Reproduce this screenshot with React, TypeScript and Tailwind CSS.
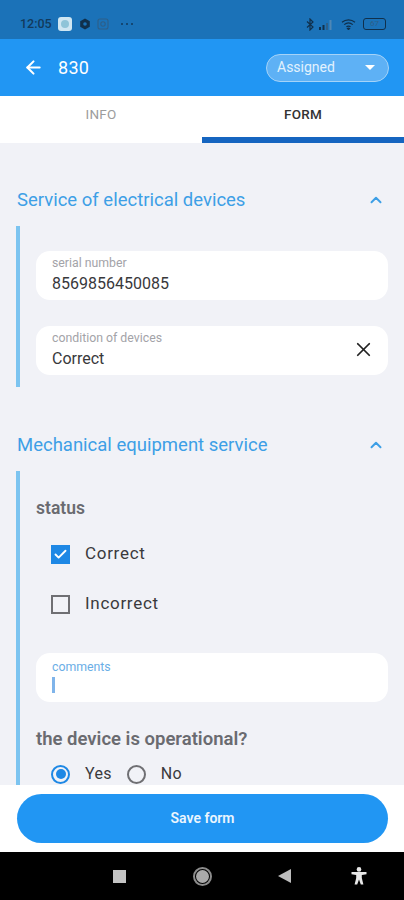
import { ArrowLeft, Check, ChevronUp, X } from "lucide-react";

function Field({ label, value, focused, clear }: { label: string; value?: string; focused?: boolean; clear?: boolean }) {
  return (
    <div className="flex h-[49px] items-center justify-between rounded-[14px] bg-white pb-[3px] pl-[16px] pr-[13px]">
      <div className="min-w-0">
        <p className={`text-[12.3px] leading-[14px] ${focused ? "text-[#6aaee6]" : "text-[#a3a3a8]"}`}>{label}</p>
        {value ? (
          <p className="mt-[4px] text-[16px] leading-[19px] text-[#38383b]">{value}</p>
        ) : (
          <div className="mt-[3px] h-[16px] w-[3px] bg-[#7fb4ea]" />
        )}
      </div>
      {clear ? <X size={23} strokeWidth={1.8} className="text-[#222]" /> : null}
    </div>
  );
}

function SectionHeader({ title }: { title: string }) {
  return (
    <div className="flex h-[28px] items-center justify-between pl-[17px] pr-[19px] pt-[3px]">
      <h2 className="text-[18.5px] font-normal leading-[24px] text-[#3d9fe6]">{title}</h2>
      <ChevronUp size={18} strokeWidth={2.6} className="text-[#3d9fe6]" />
    </div>
  );
}

function CheckRow({ label, checked }: { label: string; checked?: boolean }) {
  return (
    <div className="flex h-[20px] items-center gap-[15px] pl-[15px]">
      {checked ? (
        <span className="flex h-[19px] w-[19px] items-center justify-center bg-[#1e88e5] text-white">
          <Check size={15} strokeWidth={3} />
        </span>
      ) : (
        <span className="h-[19px] w-[19px] border-2 border-[#6f6f73]" />
      )}
      <span className="text-[17px] tracking-[0.7px] text-[#3a3a3d]">{label}</span>
    </div>
  );
}

function StatusBar() {
  return (
    <div className="flex h-[39px] shrink-0 items-center justify-between bg-[#1b72b8] pl-[20px] pr-[18px] pt-[9px] text-[#123a5c]">
      <div className="flex items-center">
        <span className="text-[12.5px] font-medium">12:05</span>
        <span className="ml-[6px] flex h-[14px] w-[14px] items-center justify-center rounded-[3px] bg-[#cfe6f2]">
          <span className="h-[8px] w-[8px] rounded-full bg-[#8fc4d8]" />
        </span>
        <svg width="12" height="12" viewBox="0 0 12 12" className="ml-[7px]">
          <polygon points="6,0.5 10.8,3.2 10.8,8.8 6,11.5 1.2,8.8 1.2,3.2" fill="#10304c" />
          <circle cx="6" cy="6" r="1.8" fill="#1b72b8" />
        </svg>
        <svg width="12" height="12" viewBox="0 0 12 12" fill="none" stroke="#2e5f88" strokeWidth="1.1" className="ml-[6px]">
          <rect x="1" y="1" width="10" height="10" rx="2" />
          <circle cx="6" cy="6" r="2.2" />
        </svg>
        <span className="ml-[12px] flex gap-[3px]">
          <span className="h-[2px] w-[2px] rounded-full bg-[#123a5c]" />
          <span className="h-[2px] w-[2px] rounded-full bg-[#123a5c]" />
          <span className="h-[2px] w-[2px] rounded-full bg-[#123a5c]" />
        </span>
      </div>
      <div className="flex items-center">
        <svg width="8" height="13" viewBox="0 0 8 13" fill="none" stroke="#10304c" strokeWidth="1.2">
          <path d="M1 3.5 L7 9 L4 12 V1 L7 4 L1 9.5" />
        </svg>
        <svg width="14" height="11" viewBox="0 0 14 11" className="ml-[5px]">
          <rect x="0" y="8" width="2" height="3" fill="#10304c" />
          <rect x="3.5" y="6" width="2" height="5" fill="#10304c" />
          <rect x="7" y="4" width="2" height="7" fill="#2e5f88" />
          <rect x="10.5" y="1" width="2" height="10" fill="#4f87b5" />
        </svg>
        <svg width="15" height="11" viewBox="0 0 15 11" fill="none" stroke="#10304c" strokeWidth="1.2" className="ml-[8px]">
          <path d="M1 3.2 C4.8 0 10.2 0 14 3.2" />
          <path d="M3.2 5.6 C5.8 3.5 9.2 3.5 11.8 5.6" />
          <path d="M5.4 7.8 C6.6 6.9 8.4 6.9 9.6 7.8" />
          <path d="M7.5 10.6 L6.4 9.4 C7.1 9 7.9 9 8.6 9.4 Z" fill="#10304c" />
        </svg>
        <span className="ml-[7px] flex h-[12px] w-[23px] items-center justify-center rounded-[3px] border border-[#10304c] text-[8px] leading-none text-[#2e5f88]">
          67
        </span>
      </div>
    </div>
  );
}

export default function App() {
  return (
    <div className="flex h-[900px] w-[404px] flex-col overflow-hidden bg-[#f1f2f7] font-['Roboto',sans-serif]">
      <StatusBar />

      <header className="flex h-[57px] shrink-0 items-center justify-between bg-[#2196f3] pl-[23px] pr-[15px]">
        <div className="flex items-center gap-[14px] text-white">
          <ArrowLeft size={21} strokeWidth={2.4} />
          <span className="text-[18px] tracking-[0.3px]">830</span>
        </div>
        <div className="flex h-[28px] w-[123px] items-center justify-between rounded-full border border-[#a5d3f8] bg-[#5eb1f5] pl-[10px] pr-[13px]">
          <span className="text-[14px] text-[#e3f2fd]">Assigned</span>
          <span className="h-0 w-0 border-x-[5px] border-t-[5px] border-x-transparent border-t-white" />
        </div>
      </header>

      <nav className="grid h-[47px] shrink-0 grid-cols-2 bg-white">
        <div className="flex items-center justify-center pb-[11px] text-[13.5px] tracking-[0.2px] text-[#9c9c9c]">INFO</div>
        <div className="flex items-center justify-center border-b-[6px] border-[#1565c0] pb-[5px] text-[13.5px] font-medium tracking-[0.2px] text-[#333]">FORM</div>
      </nav>

      <main className="min-h-0 flex-1 overflow-hidden pt-[41px]">
        <SectionHeader title="Service of electrical devices" />
        <div className="ml-[16px] mt-[14px] flex h-[161px] flex-col gap-[26px] border-l-[4px] border-[#7cc4f0] pl-[16px] pr-[16px] pt-[25px]">
          <Field label="serial number" value="8569856450085" />
          <Field label="condition of devices" value="Correct" clear />
        </div>

        <div className="mt-[42px]">
          <SectionHeader title="Mechanical equipment service" />
        </div>
        <div className="ml-[16px] mt-[14px] border-l-[4px] border-[#7cc4f0] pl-[16px] pr-[16px] pt-[25px]">
          <h3 className="text-[17.5px] font-semibold leading-[24px] text-[#6a6b70]">status</h3>
          <div className="mt-[24px] flex flex-col gap-[30px]">
            <CheckRow label="Correct" checked />
            <CheckRow label="Incorrect" />
          </div>
          <div className="mt-[39px]">
            <Field label="comments" focused />
          </div>
          <h3 className="mt-[25px] text-[18.5px] font-semibold leading-[24px] text-[#6a6b70]">the device is operational?</h3>
          <div className="mt-[11px] flex items-center pl-[15px] text-[16px] tracking-[0.3px] text-[#3a3a3d]">
            <span className="flex h-[19px] w-[19px] items-center justify-center rounded-full border-2 border-[#1e88e5]">
              <span className="h-[10px] w-[10px] rounded-full bg-[#1e88e5]" />
            </span>
            <span className="ml-[15px]">Yes</span>
            <span className="ml-[15px] h-[19px] w-[19px] rounded-full border-2 border-[#6f6f73]" />
            <span className="ml-[15px]">No</span>
          </div>
        </div>
      </main>

      <footer className="flex h-[67px] shrink-0 items-start bg-white pl-[17px] pr-[16px] pt-[9px]">
        <button className="h-[49px] w-full rounded-full bg-[#2196f3] text-[14px] font-semibold text-[#eaf5fe]">Save form</button>
      </footer>

      <div className="flex h-[48px] shrink-0 items-center bg-black pl-[113px]">
        <span className="h-[13px] w-[13px] bg-[#c4c4c4]" />
        <span className="ml-[67px] flex h-[19px] w-[19px] items-center justify-center rounded-full border-2 border-[#8c8c8c]">
          <span className="h-[13px] w-[13px] rounded-full bg-[#aaa]" />
        </span>
        <span className="ml-[66px] h-0 w-0 border-y-[7px] border-r-[13px] border-y-transparent border-r-[#bdbdbd]" />
        <svg width="16" height="18" viewBox="0 0 16 18" className="ml-[60px]" fill="#e8e8e8">
          <circle cx="8" cy="2.4" r="2.3" />
          <path d="M0.5 5 H15.5 V7.2 L10.8 8 V11 L12.4 17.6 H9.8 L8 12.4 L6.2 17.6 H3.6 L5.2 11 V8 L0.5 7.2 Z" />
        </svg>
      </div>
    </div>
  );
}
